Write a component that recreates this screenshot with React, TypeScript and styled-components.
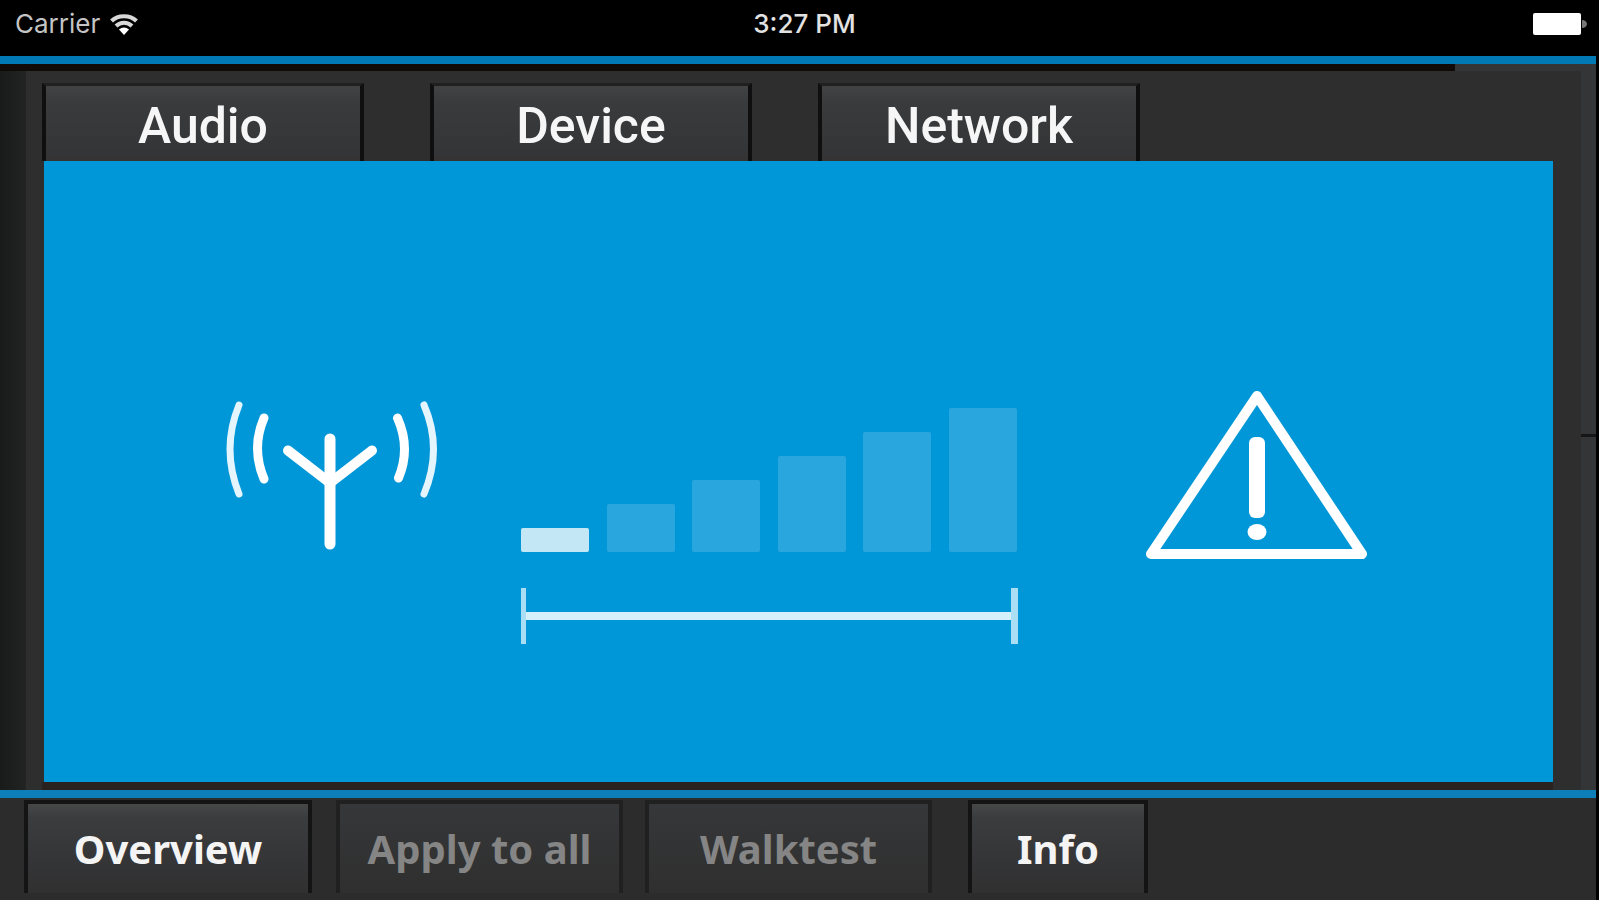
import React from "react";
import styled, { createGlobalStyle } from "styled-components";

const Global = createGlobalStyle`
  * { box-sizing: border-box; }
  body { margin: 0; background: #000; }
`;

const Screen = styled.div`
  display: flex;
  flex-direction: column;
  min-height: 100vh;
  border-right: 3px solid #000;
  background: #2e2e2e;
  color: #fff;
`;

const StatusBar = styled.header`
  display: grid;
  grid-template-columns: 1fr auto 1fr;
  align-items: center;
  height: 64px;
  padding: 0 8px 8px 15px;
  border-bottom: 8px solid #0079b5;
  background: #000;
  font: 400 26px/32px Inter, "Liberation Sans", sans-serif;
`;

const Carrier = styled.div`
  display: flex;
  align-items: center;
  gap: 10px;
  color: #c4c4c4;
`;

const Clock = styled.time`
  padding-left: 6px;
  color: #e2e2e2;
  font-weight: 500;
`;

const BatteryIcon = styled.svg`
  display: block;
  justify-self: end;
`;

const Seam = styled.div`
  height: 7px;
  margin-right: 141px;
  background: #100a08;
`;

const SeamRow = styled.div`
  background: #343537;
`;

const Body = styled.main`
  flex: 1;
  display: grid;
  grid-template-columns: 26px 1fr 15px;
`;

const Gutter = styled.div`
  background: linear-gradient(90deg, #191a1a, #222323);
`;

const Rail = styled.div`
  display: flex;
  flex-direction: column;
`;

const RailPart = styled.div<{ $share: number }>`
  flex: ${(p) => p.$share};
  background: #343537;
  & + & {
    border-top: 3px solid #161616;
  }
`;

const Content = styled.section`
  display: flex;
  flex-direction: column;
  padding: 12px 28px 0 16px;
`;

const Tabs = styled.nav`
  display: flex;
  gap: 66px;
`;

const Tab = styled.button`
  flex: 0 1 322px;
  height: 78px;
  padding: 4px 0 0;
  border: solid #0f0f10;
  border-top-color: #202020;
  border-width: 3px 4px 0;
  background: linear-gradient(#424444, #3a3b3d 20%, #343537 90%, #363232);
  color: #f6f6f6;
  font: 500 50px/70px Roboto, "Liberation Sans", sans-serif;
`;

const Panel = styled.div`
  flex: 1;
  display: grid;
  grid-template-columns: auto auto auto;
  grid-template-rows: 168px 57px;
  row-gap: 29px;
  place-content: center;
  align-items: end;
  margin: 0 0 0 2px;
  padding: 93px 6px 0 0;
  background: #0097d9;
`;

const Underline = styled.div`
  height: 8px;
  background: #2a221e;
`;

const Icon = styled.svg`
  display: block;
`;

const Bars = styled.div`
  display: flex;
  justify-content: space-between;
  align-items: end;
  width: 496px;
  margin: 0 128px 7px 81px;
`;

const Bar = styled.div<{ $level: number; $on: boolean }>`
  width: 68px;
  height: ${(p) => p.$level * 24}px;
  border-radius: 2px;
  background: ${(p) => (p.$on ? "#c4e7f5" : "#2aa6de")};
`;

const Range = styled.div`
  grid-column: 2;
  display: flex;
  align-items: center;
  height: 56px;
  margin: 0 127px 1px 81px;
  border: solid #a9def4;
  border-width: 0 7px 0 5px;
`;

const RangeLine = styled.div`
  flex: 1;
  height: 8px;
  background: #d3f0fb;
`;

const Footer = styled.footer`
  display: flex;
  height: 110px;
  padding: 2px 0 0 24px;
  border-top: 8px solid #0d7fb8;
  background: #2c2c2c;
`;

const FooterButton = styled.button<{ $width: number; $space?: number }>`
  flex: 0 1 ${(p) => p.$width}px;
  height: 93px;
  margin-left: ${(p) => p.$space ?? 0}px;
  padding: 0;
  border: solid #141414;
  border-width: 4px 4px 0;
  background: linear-gradient(#464848, #3b3c3e 15%, #303031);
  color: #f4f4f4;
  font: 700 40px/60px "Noto Sans", "Open Sans", sans-serif;
  &:disabled {
    border-color: #202020;
    background: linear-gradient(#363739, #2f2f2f);
    color: #858585;
  }
`;

const levels = [1, 2, 3, 4, 5, 6];

export default function App() {
  return (
    <>
      <Global />
      <Screen>
        <StatusBar>
          <Carrier>
            <span>Carrier</span>
            <svg width="28" height="21" viewBox="0 0 28 21" aria-label="Wi-Fi">
              <g fill="none" stroke="#d8d8d8" strokeWidth="4">
                <path d="M1.5 7C8 0.5 20 0.5 26.500 7" />
                <path d="M6 12C10.500 7.500 17.500 7.500 22 12" />
              </g>
              <path d="M9 15.500C12 12.800 16 12.800 19 15.500L14 21Z" fill="#fff" />
            </svg>
          </Carrier>
          <Clock>3:27 PM</Clock>
          <BatteryIcon width="55" height="22" viewBox="0 0 55 22" aria-label="Battery">
            <rect width="48" height="22" rx="2" fill="#fff" />
            <path d="M49 7C52 7 54 9 54 11C54 13 52 15 49 15Z" fill="#777" />
          </BatteryIcon>
        </StatusBar>
        <SeamRow>
          <Seam />
        </SeamRow>
        <Body>
          <Gutter />
          <Content>
            <Tabs>
              <Tab type="button">Audio</Tab>
              <Tab type="button">Device</Tab>
              <Tab type="button">Network</Tab>
            </Tabs>
            <Panel>
              <Icon width="218" height="163" viewBox="222 396 218 163" aria-label="Antenna">
                <g fill="none" stroke="#fff" strokeLinecap="round">
                  <path strokeWidth="11" d="M330 439V544" />
                  <path strokeWidth="10" d="M288 450.500L330 483L372 450.500" />
                  <path strokeWidth="9" d="M264 418Q251 448 264 479M397.500 418Q411 448 398.500 478" />
                  <path strokeWidth="7" stroke="#e4f5fd" d="M239 405Q221 449 239 494M424 405Q443 449 424 494" />
                </g>
              </Icon>
              <Bars>
                {levels.map((n) => (
                  <Bar key={n} $level={n} $on={n === 1} />
                ))}
              </Bars>
              <Icon width="224" height="169" viewBox="1145 391 224 169" aria-label="Warning">
                <path d="M1257 397L1362 555H1151Z" fill="none" stroke="#fff" strokeWidth="10" strokeLinejoin="round" />
                <rect x="1249" y="438" width="16" height="81" rx="6" fill="#fff" />
                <ellipse cx="1257" cy="533" rx="9.500" ry="8" fill="#fff" />
              </Icon>
              <Range>
                <RangeLine />
              </Range>
            </Panel>
            <Underline />
          </Content>
          <Rail>
            <RailPart $share={36} />
            <RailPart $share={35} />
          </Rail>
        </Body>
        <Footer>
          <FooterButton type="button" $width={288}>Overview</FooterButton>
          <FooterButton type="button" $width={287} $space={24} disabled>Apply to all</FooterButton>
          <FooterButton type="button" $width={287} $space={22} disabled>Walktest</FooterButton>
          <FooterButton type="button" $width={180} $space={36}>Info</FooterButton>
        </Footer>
      </Screen>
    </>
  );
}
